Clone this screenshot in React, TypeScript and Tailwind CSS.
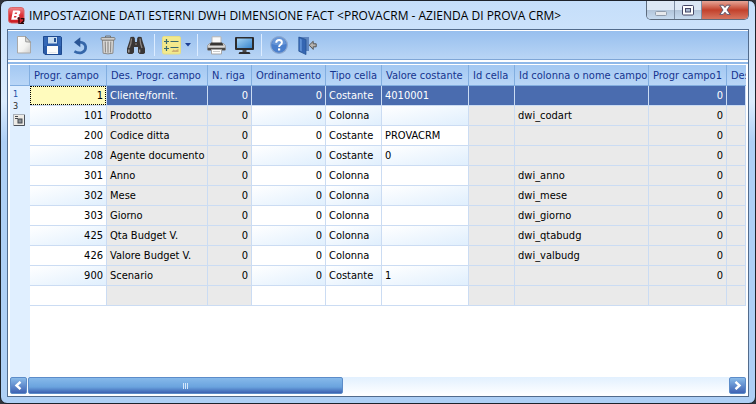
import React from "react";

type Row = {
  id: number;
  des: string;
  tipo: string;
  valore: string;
  nome: string;
};

const rows: Row[] = [
  { id: 1, des: "Cliente/fornit.", tipo: "Costante", valore: "4010001", nome: "" },
  { id: 101, des: "Prodotto", tipo: "Colonna", valore: "", nome: "dwi_codart" },
  { id: 200, des: "Codice ditta", tipo: "Costante", valore: "PROVACRM", nome: "" },
  { id: 208, des: "Agente documento", tipo: "Costante", valore: "0", nome: "" },
  { id: 301, des: "Anno", tipo: "Colonna", valore: "", nome: "dwi_anno" },
  { id: 302, des: "Mese", tipo: "Colonna", valore: "", nome: "dwi_mese" },
  { id: 303, des: "Giorno", tipo: "Colonna", valore: "", nome: "dwi_giorno" },
  { id: 425, des: "Qta Budget V.", tipo: "Colonna", valore: "", nome: "dwi_qtabudg" },
  { id: 426, des: "Valore Budget V.", tipo: "Colonna", valore: "", nome: "dwi_valbudg" },
  { id: 900, des: "Scenario", tipo: "Costante", valore: "1", nome: "" },
];

const headers = [
  "Progr. campo",
  "Des. Progr. campo",
  "N. riga",
  "Ordinamento",
  "Tipo cella",
  "Valore costante",
  "Id cella",
  "Id colonna o nome campo",
  "Progr campo1",
  "Des",
];

function AppIcon() {
  return (
    <svg width="18" height="18" viewBox="0 0 18 18" aria-hidden="true">
      <defs>
        <linearGradient id="app" x1="0" y1="0" x2="0" y2="1">
          <stop offset="0" stopColor="#f0868a" />
          <stop offset="0.5" stopColor="#dc3238" />
          <stop offset="1" stopColor="#c81c24" />
        </linearGradient>
      </defs>
      <rect x="0.5" y="0.5" width="15.5" height="15.5" rx="3" fill="url(#app)" stroke="#d9686c" />
      <path
        d="M5 3.5h5.2q2.6 0 2 2.4-.4 1.6-1.8 2 1.6.5 1 2.5-.6 2.3-3 2.3H3.2zM7 5.6l-.4 1.5h2.2l.5-1.5zM6.2 9l-.4 1.6h2.3l.5-1.6z"
        fill="#fff"
        fillRule="evenodd"
      />
      <path d="M9.5 11.5l1.5-.8V17M12.7 11.7h3v2.4l-2.7 2.2h3" fill="none" stroke="#2a0608" strokeWidth="1.3" />
    </svg>
  );
}

function NewIcon() {
  return (
    <svg width="16" height="20" viewBox="0 0 16 20" aria-hidden="true">
      <defs>
        <linearGradient id="page" x1="0" y1="0" x2="1" y2="1">
          <stop offset="0" stopColor="#fff" />
          <stop offset="0.6" stopColor="#f2f2f0" />
          <stop offset="1" stopColor="#cfcfcf" />
        </linearGradient>
      </defs>
      <path d="M1.5 1.5h8L14.5 7v11h-13z" fill="url(#page)" stroke="#aaa9a8" />
      <path d="M9.5 1.5l.2 5.3 4.8.4z" fill="#d9d9d7" stroke="#8a8a8a" strokeWidth="0.8" />
    </svg>
  );
}

function SaveIcon() {
  return (
    <svg width="19" height="19" viewBox="0 0 19 19" aria-hidden="true">
      <path d="M.5 .5h17.2l.8.8v17.2H2L.5 17z" fill="#2a5ba8" stroke="#1f4a8f" />
      <path d="M1 1h3v9H1zM15 1h3v9h-3z" fill="#3568b6" />
      <rect x="5" y="1" width="9" height="6.5" fill="#c9ddf0" />
      <rect x="11" y="2" width="2" height="4" fill="#24508f" />
      <rect x="4" y="10" width="11" height="8" fill="#fbfbfb" />
      <path d="M5.5 16.5h8" stroke="#e3e7ec" />
    </svg>
  );
}

function UndoIcon() {
  return (
    <svg width="17" height="19" viewBox="0 0 17 19" aria-hidden="true">
      <path d="M2.4 15.4Q6 17.4 9.6 16.6 14 15.2 13.6 10.6 12.8 6.4 7.5 6.2" fill="none" stroke="#3566a9" strokeWidth="2.8" />
      <path d="M8.3 1.2v10L2 6.2z" fill="#2a5595" />
    </svg>
  );
}

function TrashIcon() {
  return (
    <svg width="16" height="20" viewBox="0 0 16 20" aria-hidden="true">
      <path d="M2.5 5h11l-.6 13.2q-5 1.4-9.8 0z" fill="#dddcda" stroke="#8a8886" />
      <path d="M5.2 6.5l.3 11M8 6.5v11.3M10.8 6.5l-.3 11" stroke="#8e8b88" strokeWidth="1.2" />
      <rect x="1" y="2.5" width="14" height="2.6" rx="1" fill="#cfcdca" stroke="#74726f" strokeWidth="0.8" />
      <path d="M5.5 2.5V1h5v1.5" fill="none" stroke="#74726f" />
    </svg>
  );
}

function FindIcon() {
  return (
    <svg width="20" height="19" viewBox="0 0 20 19" aria-hidden="true">
      <path
        d="M4.5 1l3-.3 1.3 1.3.2 4h2l.2-4L12.5.7l3 .3 1 4L19 12.5V17l-1.5 1h-3.8L12 16.5V11h-4v5.5L6.3 18H2.5L1 17v-4.5L3.5 5z"
        fill="#3a3635"
      />
      <path d="M5.5 2.5L4.8 7.5l-1.6 4.5M14 2.5l.6 5 1.4 4.5" fill="none" stroke="#8b8480" strokeWidth="1.3" />
      <path d="M2.8 13.5v3M13.6 13.5v3" stroke="#a6a09d" strokeWidth="1.4" />
      <path d="M9 8h2" stroke="#8d8683" />
    </svg>
  );
}

function FormulaIcon() {
  return (
    <svg width="19" height="19" viewBox="0 0 19 19" aria-hidden="true">
      <rect x="0.5" y="0.5" width="18" height="17.5" rx="1.5" fill="#f2e98c" stroke="#e6dd84" />
      <path
        d="M2 5.5h5M4.5 3v5M8.5 5.5h8M2 12.5h5M4.5 10v5M8.5 11.5h8"
        stroke="#38686e"
        strokeWidth="1.2"
      />
      <path d="M9.5 16l2-2.5 1.5 1 3.5-1.5v3z" fill="#d0b070" />
    </svg>
  );
}

function PrintIcon() {
  return (
    <svg width="19" height="19" viewBox="0 0 19 19" aria-hidden="true">
      <path d="M5 .8h9v7H5z" fill="#fafafa" stroke="#b5b5b5" />
      <path d="M2.5 7.5h14l1.8 2v4.5H.7V9.5z" fill="#dcdbd9" stroke="#8a8887" strokeWidth="0.8" />
      <path d="M4 6.5h11l1.5 3h-14z" fill="#383634" />
      <path d="M.7 11.8h17.6v2.4H.7z" fill="#4b4947" />
      <path d="M4.5 13.5h10V18h-10z" fill="#fff" stroke="#a7a7a7" />
      <path d="M6 15.5h7" stroke="#ccc" />
    </svg>
  );
}

function MonitorIcon() {
  return (
    <svg width="19" height="19" viewBox="0 0 19 19" aria-hidden="true">
      <defs>
        <linearGradient id="scr" x1="0" y1="0" x2="1" y2="1">
          <stop offset="0" stopColor="#a3d2f4" />
          <stop offset="1" stopColor="#3a86cd" />
        </linearGradient>
      </defs>
      <rect x="0" y="1" width="19" height="13" rx="1" fill="#2c2b2d" />
      <rect x="2" y="2.5" width="15" height="9.5" fill="url(#scr)" />
      <path d="M7.5 14h4v2h-4z" fill="#4c4a4a" />
      <path d="M4.5 16h10l1 2h-12z" fill="#2f2d2d" />
    </svg>
  );
}

function HelpIcon() {
  return (
    <svg width="18" height="18" viewBox="0 0 18 18" aria-hidden="true">
      <circle cx="9" cy="9" r="8.4" fill="#4a7fcc" stroke="#8fa9cf" strokeWidth="1.2" />
      <path d="M2 8a7 7 0 0 1 14 0q-7 2.5-14 0" fill="#7ba5de" opacity="0.6" />
      <path d="M6.2 6.8Q6.3 4 9.1 4t2.8 2.5q0 1.3-1.4 2.2T9.1 11" fill="none" stroke="#fff" strokeWidth="1.9" />
      <rect x="8" y="12.4" width="2.2" height="2.1" fill="#fff" />
    </svg>
  );
}

function ExitIcon() {
  return (
    <svg width="19" height="19" viewBox="0 0 19 19" aria-hidden="true">
      <path d="M1 1h10v14H8V3H1z" fill="#5f86c0" />
      <path d="M.8 1L8 3.6v15L.8 15.2z" fill="#3566b2" stroke="#23508f" strokeWidth="0.7" />
      <path d="M1.8 2.6l2 .8v12l-2-.9z" fill="#5e8fd3" />
      <path d="M11.2 9.2l4-3.9v2.5h3v3h-3v2.6z" fill="#b5b2af" stroke="#555" strokeWidth="1" />
    </svg>
  );
}

function CardIcon() {
  return (
    <svg width="12" height="12" viewBox="0 0 12 12" aria-hidden="true">
      <rect x="0.5" y="0.5" width="11" height="11" fill="#eceae6" stroke="#a9b1bb" />
      <path d="M2 2.5h3M2 4.5h3" stroke="#43484f" />
      <rect x="5" y="5" width="4" height="4" fill="#8a9098" stroke="#43484f" />
      <path d="M11.5 1v10.5H1" fill="none" stroke="#4d535c" />
    </svg>
  );
}

function ToolButton({ label, children }: { label: string; children: React.ReactNode }) {
  return (
    <button type="button" aria-label={label} className="flex h-6 w-7 shrink-0 items-center justify-center">
      {children}
    </button>
  );
}

function Divider() {
  return <div className="h-[22px] w-px shrink-0 bg-[#dcecff]" />;
}

function TitleBar() {
  return (
    <header className="flex h-7 shrink-0 items-start justify-between pl-[7px] pr-[6px]">
      <div className="flex h-[30px] min-w-0 items-center gap-[3px]">
        <AppIcon />
        <h1 className="truncate font-['Open_Sans','Noto_Sans',sans-serif] text-[12px] leading-5 text-black">
          IMPOSTAZIONE DATI ESTERNI DWH DIMENSIONE FACT &lt;PROVACRM - AZIENDA DI PROVA CRM&gt;
        </h1>
      </div>
      <div className="flex h-[19px] shrink-0 overflow-hidden rounded-b-[5px] border border-t-0 border-[#5d6b7d]">
        <button
          type="button"
          aria-label="Riduci a icona"
          className="flex w-7 items-center justify-center border-r border-[#7d8da3] bg-linear-to-b from-[#dce8f5] from-50% via-[#b2c4d9] via-50% to-[#c7dbf0]"
        >
          <svg width="12" height="14" viewBox="0 0 12 14" aria-hidden="true">
            <rect x="0.5" y="8.5" width="11" height="4" rx="1" fill="#e6e8ec" stroke="#8f9bab" />
          </svg>
        </button>
        <button
          type="button"
          aria-label="Ingrandisci"
          className="flex w-[27px] items-center justify-center border-r border-[#7d8da3] bg-linear-to-b from-[#dce8f5] from-50% via-[#b2c4d9] via-50% to-[#c7dbf0]"
        >
          <svg width="12" height="11" viewBox="0 0 12 11" aria-hidden="true">
            <rect x="0.5" y="0.5" width="11" height="9.5" rx="1" fill="#fff" stroke="#454766" />
            <rect x="3.5" y="3.5" width="5" height="3.5" fill="#a9b9cf" stroke="#454766" />
          </svg>
        </button>
        <button
          type="button"
          aria-label="Chiudi"
          className="flex w-[46px] items-center justify-center bg-linear-to-b from-[#e5a597] from-0% via-[#c2402b] via-50% to-[#d67560]"
        >
          <svg width="12" height="12" viewBox="0 0 12 12" aria-hidden="true">
            <path
              d="M.8 1.2h3.4L6 3.5l1.8-2.3h3.4L8 6l3.2 4.4H7.8L6 8.2l-1.8 2.2H.8L4 6z"
              fill="#fff"
              stroke="#545066"
              strokeWidth="0.9"
            />
          </svg>
        </button>
      </div>
    </header>
  );
}

function Toolbar() {
  return (
    <div
      role="toolbar"
      className="flex h-[30px] shrink-0 items-center border-t border-b border-t-white border-b-[#7fa6d6] bg-linear-to-b from-[#97bfee] to-[#b9d5f5] pl-[2px]"
    >
      <ToolButton label="Nuovo"><NewIcon /></ToolButton>
      <ToolButton label="Salva"><SaveIcon /></ToolButton>
      <ToolButton label="Ripristina"><UndoIcon /></ToolButton>
      <ToolButton label="Cancella"><TrashIcon /></ToolButton>
      <ToolButton label="Cerca"><FindIcon /></ToolButton>
      <div className="flex shrink-0 items-center pl-1">
        <Divider />
        <button type="button" aria-label="Funzioni" className="flex h-6 w-[42px] items-center justify-center gap-1">
          <FormulaIcon />
          <svg width="6" height="4" viewBox="0 0 6 4" aria-hidden="true">
            <path d="M0 0h6L3 3.6z" fill="#1c3f94" />
          </svg>
        </button>
        <Divider />
      </div>
      <div className="flex shrink-0 items-center pl-1">
        <ToolButton label="Stampa"><PrintIcon /></ToolButton>
        <ToolButton label="Anteprima"><MonitorIcon /></ToolButton>
      </div>
      <div className="flex shrink-0 items-center gap-[3px] pl-[3px]">
        <Divider />
        <div className="flex">
          <ToolButton label="Guida"><HelpIcon /></ToolButton>
          <ToolButton label="Esci"><ExitIcon /></ToolButton>
        </div>
      </div>
    </div>
  );
}

function Cell({
  children,
  grey,
  right,
  selected,
  striped,
}: {
  children?: React.ReactNode;
  grey?: boolean;
  right?: boolean;
  selected?: boolean;
  striped?: boolean;
}) {
  const fill = selected
    ? "bg-[#4a6caf] text-white"
    : grey
      ? "bg-[#eaeaea] text-black"
      : striped
        ? "bg-linear-to-br from-white to-[#e0effd] text-black"
        : "bg-white text-black";
  return (
    <td
      className={`h-5 overflow-hidden border-r border-b border-[#cbdcf3] p-0 whitespace-nowrap ${fill} ${
        right ? "pr-[3px] text-right" : "pl-[3px]"
      }`}
    >
      {children}
    </td>
  );
}

function DataTable() {
  return (
    <table className="w-full min-w-[716px] table-fixed border-separate border-spacing-0 text-[11px] leading-[19px]">
      <colgroup>
        <col className="w-[77px]" />
        <col className="w-[101px]" />
        <col className="w-[44px]" />
        <col className="w-[74px]" />
        <col className="w-[56px]" />
        <col className="w-[87px]" />
        <col className="w-[46px]" />
        <col className="w-[134px]" />
        <col className="w-[78px]" />
        <col />
      </colgroup>
      <thead>
        <tr>
          {headers.map((h) => (
            <th
              key={h}
              scope="col"
              className="h-[21px] overflow-hidden border-r border-b border-[#82aee0] bg-linear-to-b from-[#a3c8f2] to-[#b9d6f7] p-0 pl-1 text-left font-normal whitespace-nowrap text-[#15348f] last:border-r-0"
            >
              {h}
            </th>
          ))}
        </tr>
      </thead>
      <tbody>
        {rows.map((r, i) => {
          const selected = i === 0;
          const striped = i % 2 === 1;
          return (
            <tr key={r.id}>
              {selected ? (
                <td className="h-5 border-r border-b border-[#cbdcf3] bg-[#ffffc0] p-0">
                  <input
                    aria-label="Progr. campo"
                    defaultValue={String(r.id)}
                    className="block h-[19px] w-full border border-dotted border-black bg-[#fffbbd] pr-[2px] text-right text-black outline-none"
                  />
                </td>
              ) : (
                <Cell right striped={striped}>{r.id}</Cell>
              )}
              <Cell grey selected={selected}>{r.des}</Cell>
              <Cell grey right selected={selected}>0</Cell>
              <Cell right selected={selected} striped={striped}>0</Cell>
              <Cell selected={selected} striped={striped}>{r.tipo}</Cell>
              <Cell selected={selected} striped={striped}>{r.valore}</Cell>
              <Cell grey selected={selected} />
              <Cell grey selected={selected}>{r.nome}</Cell>
              <Cell grey right selected={selected}>0</Cell>
              <Cell grey selected={selected} />
            </tr>
          );
        })}
        <tr>
          <Cell />
          <Cell grey />
          <Cell grey />
          <Cell />
          <Cell />
          <Cell />
          <Cell grey />
          <Cell grey />
          <Cell grey />
          <Cell grey />
        </tr>
      </tbody>
    </table>
  );
}

function ScrollArrow({ label, d }: { label: string; d: string }) {
  return (
    <button
      type="button"
      aria-label={label}
      className="flex h-[17px] w-[17px] shrink-0 items-center justify-center rounded-[2px] border border-[#5c8cc9] bg-linear-to-b from-[#8abbe9] to-[#3f62b3]"
    >
      <svg width="9" height="9" viewBox="0 0 9 9" aria-hidden="true">
        <path d={d} fill="none" stroke="#fff" strokeWidth="2.4" />
      </svg>
    </button>
  );
}

function ScrollBar() {
  return (
    <div className="flex h-[18px] shrink-0 bg-linear-to-b from-[#e2f0fe] to-white">
      <ScrollArrow label="Scorri a sinistra" d="M6.5 .8L2.5 4.5l4 3.7" />
      <div className="flex min-w-0 flex-1 pl-px">
        <div className="flex h-[17px] w-[45%] items-center justify-center gap-px rounded-[2px] border border-[#5c8cc9] bg-linear-to-b from-[#86b9ea] via-[#6aa3de] via-60% to-[#3d60b0]">
          <span className="h-[6px] w-px bg-[#d4e6fa]" />
          <span className="h-[6px] w-px bg-[#d4e6fa]" />
          <span className="h-[6px] w-px bg-[#d4e6fa]" />
        </div>
      </div>
      <ScrollArrow label="Scorri a destra" d="M2.5 .8l4 3.7-4 3.7" />
    </div>
  );
}

export default function App() {
  return (
    <div className="h-screen bg-[#30343c] font-['DejaVu_Sans_Condensed','DejaVu_Sans',sans-serif]">
      <div className="flex h-full flex-col overflow-hidden rounded-[7px] border border-[#1d222b] bg-linear-to-b from-[#c5defa] from-0% via-[#dcecfd] via-25% to-[#aecff5] to-35%">
        <TitleBar />
        <main className="mx-[6px] mb-[6px] flex min-h-0 flex-1 flex-col border border-[#526b8c] bg-white">
          <Toolbar />
          <div className="mt-[2px] flex min-h-0 flex-1 flex-col border-t-2 border-[#8fb8e8] px-[2px] pt-px pb-px">
            <div className="flex min-h-0 flex-1 overflow-hidden">
              <aside className="flex w-5 shrink-0 flex-col bg-[#e0efff] text-[9px] leading-3">
                <div className="h-[21px] shrink-0 border-r border-b border-[#82aee0] bg-linear-to-b from-[#a3c8f2] to-[#b9d6f7]" />
                <div className="flex flex-col gap-[2px] pt-[2px] pl-[3px]">
                  <div>
                    <div className="text-[#1b4fa5]">1</div>
                    <div className="text-[#2a2a2a]">3</div>
                  </div>
                  <CardIcon />
                </div>
              </aside>
              <div className="min-w-0 flex-1 overflow-hidden">
                <DataTable />
              </div>
            </div>
            <ScrollBar />
          </div>
        </main>
      </div>
    </div>
  );
}
